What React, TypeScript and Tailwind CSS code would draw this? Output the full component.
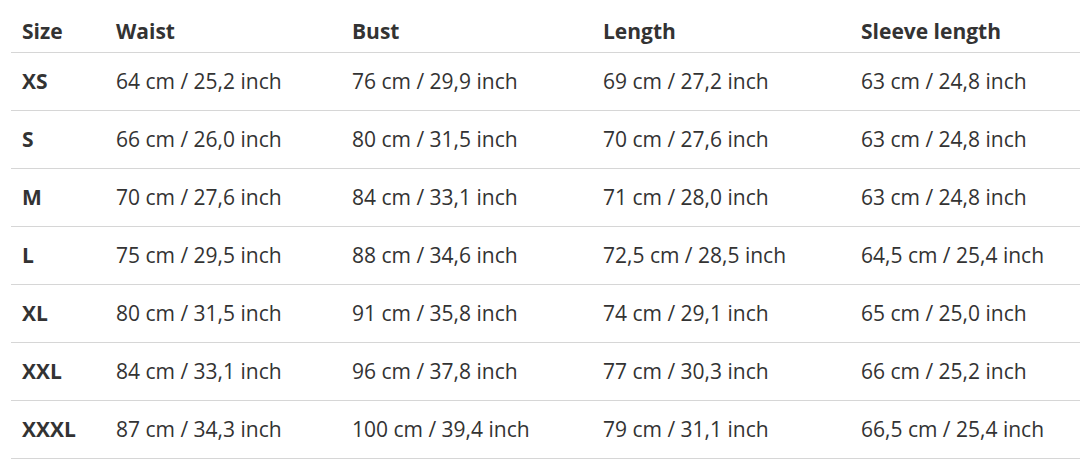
import React from "react";

const headers = ["Size", "Waist", "Bust", "Length", "Sleeve length"];
const rows: string[][] = [
  ["XS", "64 cm / 25,2 inch", "76 cm / 29,9 inch", "69 cm / 27,2 inch", "63 cm / 24,8 inch"],
  ["S", "66 cm / 26,0 inch", "80 cm / 31,5 inch", "70 cm / 27,6 inch", "63 cm / 24,8 inch"],
  ["M", "70 cm / 27,6 inch", "84 cm / 33,1 inch", "71 cm / 28,0 inch", "63 cm / 24,8 inch"],
  ["L", "75 cm / 29,5 inch", "88 cm / 34,6 inch", "72,5 cm / 28,5 inch", "64,5 cm / 25,4 inch"],
  ["XL", "80 cm / 31,5 inch", "91 cm / 35,8 inch", "74 cm / 29,1 inch", "65 cm / 25,0 inch"],
  ["XXL", "84 cm / 33,1 inch", "96 cm / 37,8 inch", "77 cm / 30,3 inch", "66 cm / 25,2 inch"],
  ["XXXL", "87 cm / 34,3 inch", "100 cm / 39,4 inch", "79 cm / 31,1 inch", "66,5 cm / 25,4 inch"],
];

const grid = "grid grid-cols-[94px_236px_251px_258px_1fr] border-b border-[#d6d6d6]";

export default function App() {
  return (
    <div className="w-[1080px] h-[459px] bg-white overflow-hidden text-[#333333] text-[21px]" style={{ fontFamily: '"Open Sans", sans-serif' }}>
      <div className="ml-[11px]">
        <div className={`${grid} h-[53px] items-center pt-[12px] font-bold`}>
          {headers.map((h) => (
            <div key={h} className="pl-[11px] whitespace-nowrap">{h}</div>
          ))}
        </div>
        {rows.map((r) => (
          <div key={r[0]} className={`${grid} h-[58px] items-center pt-[1px]`}>
            {r.map((c, i) => (
              <div key={i} className={`pl-[11px] whitespace-nowrap ${i === 0 ? "font-bold" : ""}`}>{c}</div>
            ))}
          </div>
        ))}
      </div>
    </div>
  );
}
